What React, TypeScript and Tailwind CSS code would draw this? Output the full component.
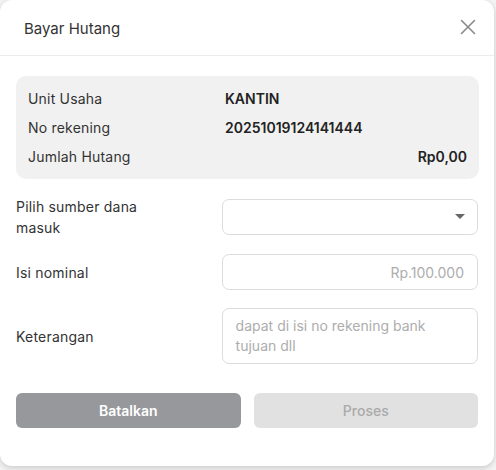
import React from "react";

const font = { fontFamily: "Inter, 'Noto Sans', sans-serif" };

function Row({ label, value, right }: { label: string; value: string; right?: boolean }) {
  return (
    <div className="flex items-center h-[29px]">
      <div className="w-[197px] text-[14px] text-[#333] tracking-[0.2px]">{label}</div>
      <div className={`flex-1 text-[14px] font-semibold text-[#222] ${right ? "text-right" : ""}`}>{value}</div>
    </div>
  );
}

export default function App() {
  return (
    <div className="w-[496px] h-[470px] bg-[#f4f4f4]" style={font}>
      <div className="w-[494px] h-[466px] bg-white rounded-[12px] shadow-[0_2px_6px_rgba(0,0,0,0.18)] flex flex-col">
        <div className="flex items-center justify-between h-[56px] pl-6 pr-4 pt-[4px] border-b border-[#ececec]">
          <span className="text-[15px] text-[#333]">Bayar Hutang</span>
          <svg width="16" height="16" viewBox="0 0 16 16" className="mt-[-6px] mr-[2px]">
            <path d="M1.5 1.5 L14.5 14.5 M14.5 1.5 L1.5 14.5" stroke="#8a8a8a" strokeWidth="1.6" strokeLinecap="round" />
          </svg>
        </div>

        <div className="px-4 pt-[20px]">
          <div className="bg-[#f1f1f1] rounded-[10px] px-3 py-[8px] w-[463px]">
            <Row label="Unit Usaha" value="KANTIN" />
            <Row label="No rekening" value="20251019124141444" />
            <Row label="Jumlah Hutang" value="Rp0,00" right />
          </div>

          <div className="flex items-center mt-[17px]">
            <div className="w-[150px] text-[14px] leading-[21px] text-[#333] tracking-[0.2px]">Pilih sumber dana masuk</div>
            <div className="ml-[56px] w-[257px] h-[36px] border border-[#dcdcdc] rounded-[7px] flex items-center justify-end pr-3">
              <svg width="10" height="6" viewBox="0 0 10 6">
                <path d="M0 0 L10 0 L5 5 Z" fill="#666" />
              </svg>
            </div>
          </div>

          <div className="flex items-center mt-[16px]">
            <div className="w-[150px] text-[14px] text-[#333] tracking-[0.2px]">Isi nominal</div>
            <div className="ml-[56px] w-[257px] h-[36px] border border-[#dcdcdc] rounded-[7px] flex items-center justify-end pr-[13px] text-[14px] text-[#adadad]">
              Rp.100.000
            </div>
          </div>

          <div className="flex items-center mt-[18px]">
            <div className="w-[150px] text-[14px] text-[#333] tracking-[0.2px]">Keterangan</div>
            <div className="ml-[56px] w-[257px] h-[56px] border border-[#dcdcdc] rounded-[7px] px-[13px] pt-[7px] text-[14px] leading-[20px] text-[#adadad]">
              dapat di isi no rekening bank tujuan dll
            </div>
          </div>

          <div className="flex gap-[13px] mt-[29px]">
            <div className="w-[225px] h-[35px] rounded-[6px] bg-[#96989b] flex items-center justify-center text-[14px] font-semibold text-white">
              Batalkan
            </div>
            <div className="w-[225px] h-[35px] rounded-[6px] bg-[#e1e1e1] flex items-center justify-center text-[14px] font-medium text-[#aaaaaa]">
              Proses
            </div>
          </div>
        </div>
      </div>
    </div>
  );
}
